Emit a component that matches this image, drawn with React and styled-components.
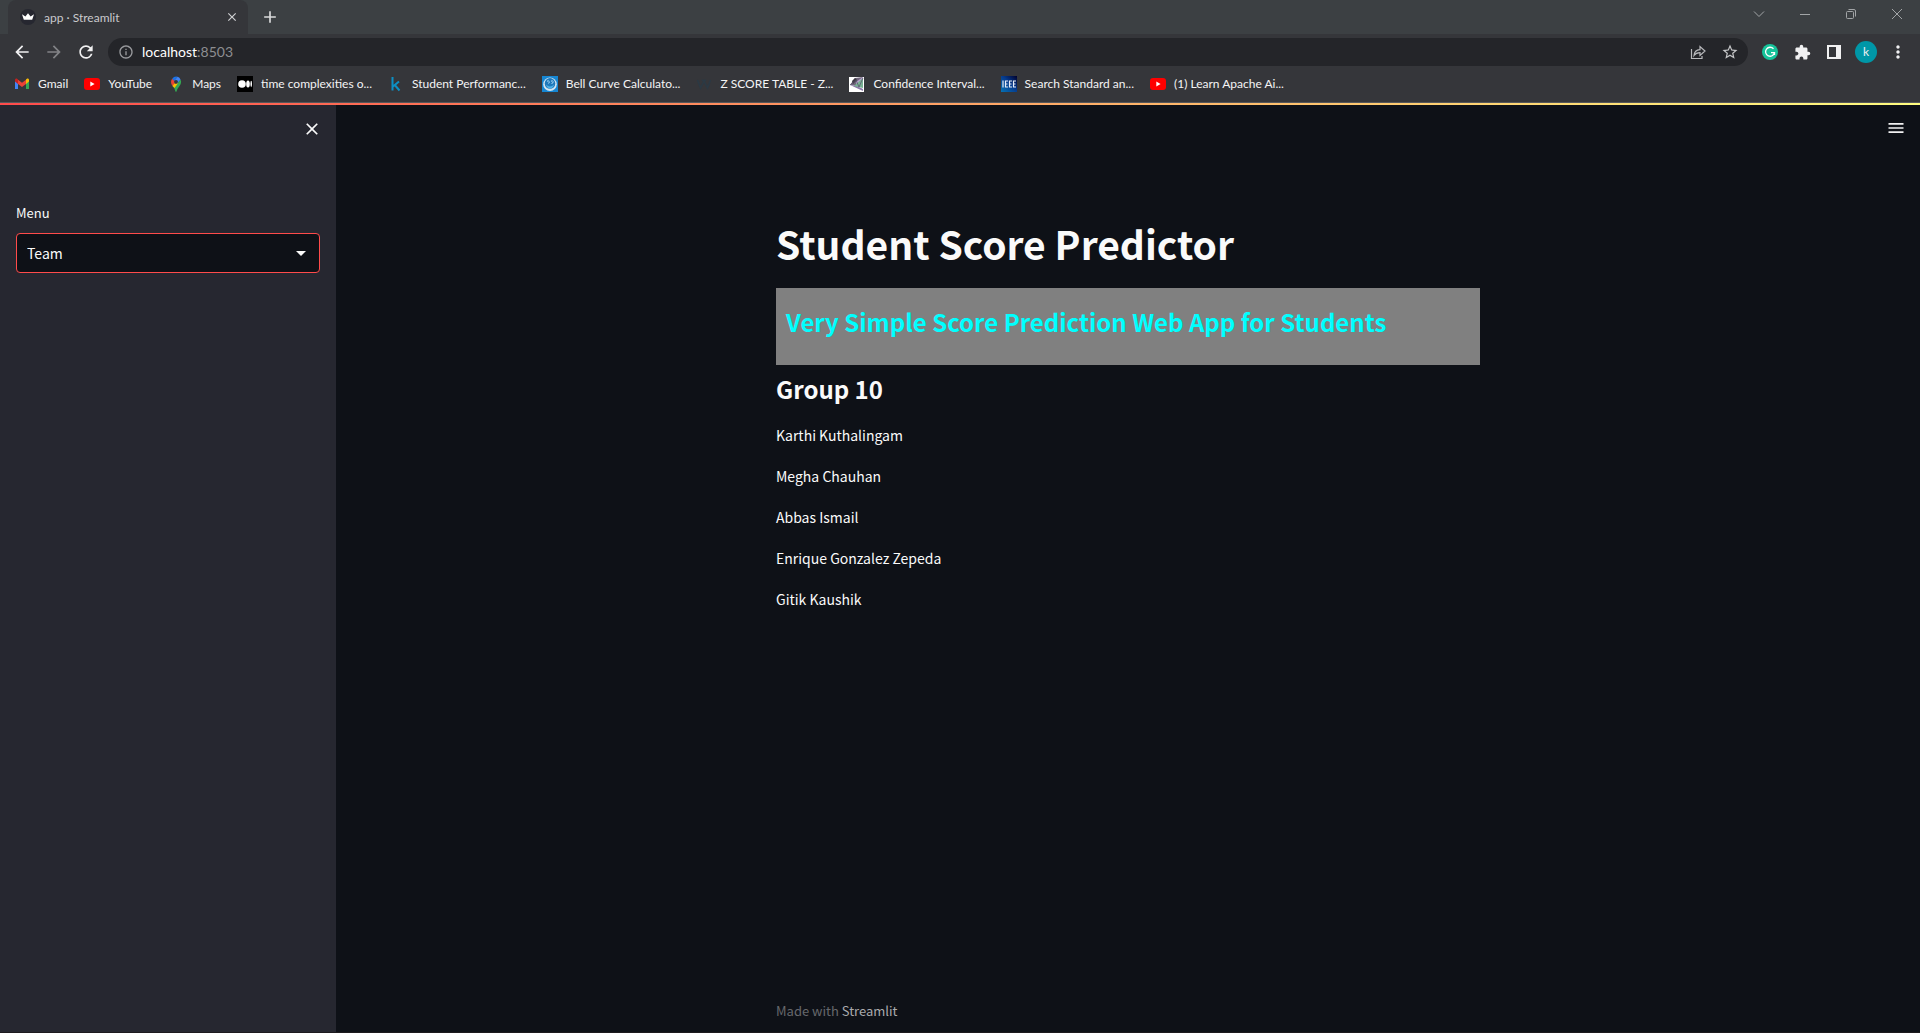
import React from "react";
import styled, { createGlobalStyle } from "styled-components";
import { MdArrowBack, MdArrowForward, MdRefresh, MdInfoOutline, MdStarBorder, MdExtension, MdMoreVert, MdClose, MdAdd, MdMenu, MdArrowDropDown } from "react-icons/md";

const chromeFont = 'Lato, "Open Sans", sans-serif';
const appFont = '"Noto Sans CJK JP", "Noto Sans CJK SC", sans-serif';

const GlobalStyle = createGlobalStyle`
  *, *::before, *::after { box-sizing: border-box; }
  body { margin: 0; background: #0e1117; }
  button, input, select { font: inherit; color: inherit; }
  h1, h2, p { margin: 0; }
`;

const Window = styled.div`
  display: flex;
  flex-direction: column;
  min-height: 100vh;
  font-family: ${chromeFont};
  font-size: 12px;
  color: #fff;
`;

const IconButton = styled.button`
  display: flex;
  align-items: center;
  justify-content: center;
  flex: none;
  width: ${(p) => p.$width || 32}px;
  height: ${(p) => p.$height || 28}px;
  padding: 0;
  border: 0;
  background: none;
  color: ${(p) => p.$color || "#f1f1f2"};
  & > svg { flex: none; }
`;

const TabStrip = styled.header`
  display: flex;
  height: 34px;
  padding-left: 8px;
  background: #3c4043;
`;

const Tab = styled.div`
  display: flex;
  align-items: center;
  gap: 8px;
  width: 240px;
  padding: 0 4px 0 12px;
  border-radius: 8px 8px 0 0;
  background: #35363a;
  color: #c9cacc;
`;

const TabTitle = styled.span`
  flex: 1;
`;

const WindowControls = styled.div`
  display: flex;
  margin-left: auto;
`;

const Toolbar = styled.div`
  display: flex;
  align-items: center;
  height: 36px;
  padding: 0 6px;
  background: #35363a;
`;

const AddressBar = styled.div`
  display: flex;
  align-items: center;
  flex: 1;
  height: 28px;
  margin: 0 6px;
  padding: 0 2px 0 10px;
  border-radius: 14px;
  background: #242529;
  color: #9a9b9e;
`;

const Address = styled.a`
  flex: 1;
  padding-left: 8px;
  color: #8d8e91;
  font-size: 14px;
  line-height: 28px;
  text-decoration: none;
`;

const Host = styled.span`
  color: #fff;
`;

const Avatar = styled.span`
  width: 22px;
  height: 22px;
  border-radius: 50%;
  background: #0097a7;
  font-size: 12px;
  line-height: 22px;
`;

const Bookmarks = styled.nav`
  display: flex;
  align-items: center;
  gap: 16px;
  height: 33px;
  padding: 0 14px 5px;
  border-bottom: 1px solid #55575b;
  background: #35363a;
`;

const Bookmark = styled.a`
  display: flex;
  align-items: center;
  gap: 8px;
  color: #f4f4f5;
  text-decoration: none;
  white-space: nowrap;
`;

const Decoration = styled.div`
  height: 2px;
  background: linear-gradient(90deg, #ff4b4b, #fffd80);
`;

const Page = styled.div`
  display: flex;
  flex: 1;
  border-bottom: 1px solid #1d1a1e;
  background: #0e1117;
  font-family: ${appFont};
  font-size: 14px;
  color: #fafafa;
`;

const Sidebar = styled.aside`
  display: flex;
  flex-direction: column;
  width: 336px;
  padding: 10px 16px;
  background: #262730;
`;

const CloseRow = styled.div`
  display: flex;
  justify-content: flex-end;
`;

const Field = styled.div`
  display: flex;
  flex-direction: column;
  gap: 10px;
  padding-top: 60px;
`;

const Label = styled.label`
  font-size: 13px;
  line-height: 20px;
`;

const SelectBox = styled.div`
  display: grid;
  align-items: center;
  border: 1px solid #ff4b4b;
  border-radius: 4px;
  background: #0e1117;
  & > * { grid-area: 1 / 1; }
  & > svg { justify-self: end; margin-right: 6px; pointer-events: none; }
`;

const Select = styled.select`
  height: 38px;
  padding: 0 10px;
  border: 0;
  outline: 0;
  appearance: none;
  background: transparent;
  font-size: 14px;
`;

const Main = styled.main`
  display: flex;
  flex-direction: column;
  flex: 1;
`;

const MenuRow = styled.div`
  display: flex;
  justify-content: flex-end;
  padding: 9px 8px;
`;

const Column = styled.div`
  display: flex;
  flex-direction: column;
  flex: 1;
  width: 100%;
  max-width: 704px;
  margin: 0 auto;
`;

const Title = styled.h1`
  padding: 64px 0 17px;
  font-size: 39px;
  line-height: 56px;
  font-weight: 700;
`;

const Banner = styled.div`
  padding: 17px 10px 26px;
  background: #808080;
`;

const Heading = styled.h2`
  font-size: 24px;
  line-height: 34px;
  font-weight: 700;
  color: ${(p) => p.$color || "inherit"};
`;

const Group = styled.section`
  display: flex;
  flex-direction: column;
  gap: 17px;
  padding-top: 7px;
`;

const Members = styled.ul`
  display: flex;
  flex-direction: column;
  gap: 16px;
  margin: 0;
  padding: 0;
  list-style: none;
  line-height: 25px;
`;

const Footer = styled.footer`
  margin-top: auto;
  padding-bottom: 10px;
  font-size: 13px;
  line-height: 22px;
  color: #66686c;
`;

const FooterLink = styled.a`
  color: #a9aaad;
  text-decoration: none;
`;

const Svg = ({ children }) => (
  <svg width="16" height="16" viewBox="0 0 16 16" fill="none" aria-hidden="true">{children}</svg>
);

const StreamlitIcon = () => (
  <Svg>
    <circle cx="8" cy="8" r="8" fill="#262730" />
    <path d="M2 5.2 5.4 7.4 8 4.2l2.6 3.2L14 5.2l-1.8 5.6H3.8z" fill="#fff" />
  </Svg>
);
const GmailIcon = () => (
  <Svg>
    <path d="M1 4v9h3V7z" fill="#4285f4" />
    <path d="M15 4v9h-3V7z" fill="#34a853" />
    <path d="M12 3.5 13.2 2.6Q15 2 15 4v1.5L12 8z" fill="#fbbc04" />
    <path d="M1 5.5V4q0-2 1.8-1.4L4 3.5V8z" fill="#c5221f" />
    <path d="M4 3.7 8 6.8l4-3.1V8l-4 3-4-3z" fill="#ea4335" />
  </Svg>
);
const YouTubeIcon = () => (
  <Svg>
    <rect y="2" width="16" height="12" rx="3" fill="#f00" />
    <path d="m6.3 5.5 4.3 2.5-4.3 2.5z" fill="#fff" />
  </Svg>
);
const MapsIcon = () => (
  <Svg>
    <path d="M3 6a5 5 0 0 1 1.2-3.2L8 6 4.5 10Q3 8 3 6z" fill="#ea4335" />
    <path d="M4.2 2.8A5 5 0 0 1 9.6.8L6.2 4.7z" fill="#1a73e8" />
    <path d="M9.6.8a5 5 0 0 1 3 2.9L9.3 7.5 6.2 4.7z" fill="#4285f4" />
    <path d="M4.5 10 9.6 7l3-3.3Q14 7 11.5 10 9 13 8.6 15.3q-.6 1.4-1.2 0Q7 12 4.5 10z" fill="#34a853" />
    <path d="m4.5 10 1.7-2.5L10 7.3 6.5 12z" fill="#fbbc04" />
    <circle cx="8" cy="5.8" r="1.9" fill="#35363a" />
  </Svg>
);
const MediumIcon = () => (
  <Svg>
    <rect width="16" height="16" fill="#000" />
    <circle cx="5" cy="8" r="3.8" fill="#fff" />
    <ellipse cx="11" cy="8" rx="1.8" ry="3.6" fill="#fff" />
    <ellipse cx="14.2" cy="8" rx=".8" ry="3.2" fill="#fff" />
  </Svg>
);
const KaggleIcon = () => (
  <Svg><path d="M4.5 1v13.5M11 5.5 5 10.5M6.8 9 11.5 14.5" stroke="#0d8fc4" strokeWidth="2" /></Svg>
);
const BellIcon = () => (
  <Svg>
    <rect width="16" height="16" fill="#1686d2" />
    <circle cx="8" cy="8.3" r="6.8" fill="#d3e4f0" />
    <circle cx="8" cy="7.4" r="5.3" fill="#1f78ba" />
    <path d="M4 8.5q4 4 8 0-1 4-4 4t-4-4z" fill="#4fb2e6" />
    <path d="M5 5.5q1.500-2 2 0T6.500 7.500M9 5.500q1.500-2 2 0T9.500 7.500" stroke="#a9dbf7" />
  </Svg>
);
const WIcon = () => (
  <Svg><path d="m1.500 4 3 8L8 5l3.500 7 3-8M8 5 6 4m2 1 2-1" stroke="#2b3944" strokeWidth="1.600" /></Svg>
);
const PolyhedronIcon = () => (
  <Svg>
    <path d="M0 1h15v15H0z" fill="#fff" />
    <path d="M1 9 6 2l8-1-6 9z" fill="#71677d" />
    <path d="M7 6 14 1v9l-6 1z" fill="#b8a2cf" />
    <path d="m1 9 7 1 6 3v2z" fill="#8d79aa" />
    <path d="m5 10 9-8v10z" fill="#78b193" />
    <path d="m3 5 3-3 2 2-4 4z" fill="#3c3943" />
    <path d="m7 4 3 7 4-9M1 9l6-5" stroke="#574b69" strokeWidth=".7" />
  </Svg>
);
const IeeeIcon = () => (
  <Svg>
    <defs>
      <linearGradient id="ieee" x1="0" y1="1" x2="1" y2="0">
        <stop stopColor="#0673b5" /><stop offset=".55" stopColor="#063a8c" /><stop offset="1" stopColor="#00002c" />
      </linearGradient>
    </defs>
    <rect width="16" height="16" fill="url(#ieee)" />
    <path d="M2 4.5v7M7 5H4.5v6H7M4.5 8h2M11 5H8.5v6H11M8.5 8h2M15 5h-2.5v6H15M12.5 8h2" stroke="#e6edf8" strokeWidth="1.2" />
  </Svg>
);
const ShareIcon = () => (
  <Svg>
    <path d="M1.5 5v9.5H12V12M4 11.5Q4.5 6 10 5.7V2.5L15 7l-5 4.500V8.700Q6 8.700 4 11.500z" stroke="#b9babd" strokeWidth="1.200" />
  </Svg>
);
const GrammarlyIcon = () => (
  <Svg>
    <circle cx="8" cy="8" r="8" fill="#15c39a" />
    <path d="M11.5 4.8A4.5 4.5 0 1 0 12.5 8.7H9M12.5 8.2V11" stroke="#fff" strokeWidth="1.3" />
  </Svg>
);
const SidePanelIcon = () => (
  <Svg>
    <path d="M1 1h14v14H1zM3 3v10h7V3z" fill="#f1f1f2" fillRule="evenodd" />
  </Svg>
);
const ChevronIcon = () => <Svg><path d="m3 5.5 5 5 5-5" stroke="#a2a5a7" /></Svg>;
const MinimizeIcon = () => <Svg><path d="M3 8.5h10" stroke="#a2a5a7" /></Svg>;
const RestoreIcon = () => (
  <Svg><rect x="3.5" y="5.5" width="7" height="7" rx="1" stroke="#a2a5a7" /><path d="M5.5 3.5H11q1.5 0 1.5 1.5v5.5" stroke="#a2a5a7" /></Svg>
);
const CrossIcon = () => <Svg><path d="m3 3 10 10M13 3 3 13" stroke="#a2a5a7" /></Svg>;

const bookmarks = [
  [GmailIcon, "Gmail"],
  [YouTubeIcon, "YouTube"],
  [MapsIcon, "Maps"],
  [MediumIcon, "time complexities o..."],
  [KaggleIcon, "Student Performanc..."],
  [BellIcon, "Bell Curve Calculato..."],
  [WIcon, "Z SCORE TABLE - Z..."],
  [PolyhedronIcon, "Confidence Interval..."],
  [IeeeIcon, "Search Standard an..."],
  [YouTubeIcon, "(1) Learn Apache Ai..."],
];

const members = ["Karthi Kuthalingam", "Megha Chauhan", "Abbas Ismail", "Enrique Gonzalez Zepeda", "Gitik Kaushik"];

export default function App() {
  return (
    <Window>
      <GlobalStyle />
      <TabStrip>
        <Tab>
          <StreamlitIcon />
          <TabTitle>app · Streamlit</TabTitle>
          <IconButton $width={24} $color="#d0d1d3" aria-label="Close tab"><MdClose size={14} /></IconButton>
        </Tab>
        <IconButton $width={44} $height={34} $color="#d9dadb" aria-label="New tab"><MdAdd size={20} /></IconButton>
        <WindowControls>
          <IconButton $width={46} aria-label="Search tabs"><ChevronIcon /></IconButton>
          <IconButton $width={46} aria-label="Minimize"><MinimizeIcon /></IconButton>
          <IconButton $width={46} aria-label="Restore"><RestoreIcon /></IconButton>
          <IconButton $width={46} aria-label="Close"><CrossIcon /></IconButton>
        </WindowControls>
      </TabStrip>
      <Toolbar>
        <IconButton aria-label="Back"><MdArrowBack size={20} /></IconButton>
        <IconButton $color="#828386" aria-label="Forward"><MdArrowForward size={20} /></IconButton>
        <IconButton aria-label="Reload"><MdRefresh size={20} /></IconButton>
        <AddressBar>
          <MdInfoOutline size={16} />
          <Address href="#"><Host>localhost</Host>:8503</Address>
          <IconButton aria-label="Share"><ShareIcon /></IconButton>
          <IconButton $color="#c5c6c8" aria-label="Bookmark this page"><MdStarBorder size={18} /></IconButton>
        </AddressBar>
        <IconButton aria-label="Grammarly"><GrammarlyIcon /></IconButton>
        <IconButton aria-label="Extensions"><MdExtension size={17} /></IconButton>
        <IconButton aria-label="Side panel"><SidePanelIcon /></IconButton>
        <IconButton aria-label="Profile"><Avatar>k</Avatar></IconButton>
        <IconButton aria-label="More"><MdMoreVert size={20} /></IconButton>
      </Toolbar>
      <Bookmarks>
        {bookmarks.map(([Icon, name]) => (
          <Bookmark href="#" key={name}><Icon />{name}</Bookmark>
        ))}
      </Bookmarks>
      <Decoration />
      <Page>
        <Sidebar>
          <CloseRow>
            <IconButton $width={16} $color="#fafafa" aria-label="Close sidebar"><MdClose size={20} /></IconButton>
          </CloseRow>
          <Field>
            <Label htmlFor="menu">Menu</Label>
            <SelectBox>
              <Select id="menu" defaultValue="Team"><option>Team</option></Select>
              <MdArrowDropDown size={24} />
            </SelectBox>
          </Field>
        </Sidebar>
        <Main>
          <MenuRow>
            <IconButton aria-label="Main menu"><MdMenu size={20} /></IconButton>
          </MenuRow>
          <Column>
            <Title>Student Score Predictor</Title>
            <Banner><Heading $color="#00ffff">Very Simple Score Prediction Web App for Students</Heading></Banner>
            <Group>
              <Heading>Group 10</Heading>
              <Members>{members.map((m) => <li key={m}>{m}</li>)}</Members>
            </Group>
            <Footer>Made with <FooterLink href="#">Streamlit</FooterLink></Footer>
          </Column>
        </Main>
      </Page>
    </Window>
  );
}
